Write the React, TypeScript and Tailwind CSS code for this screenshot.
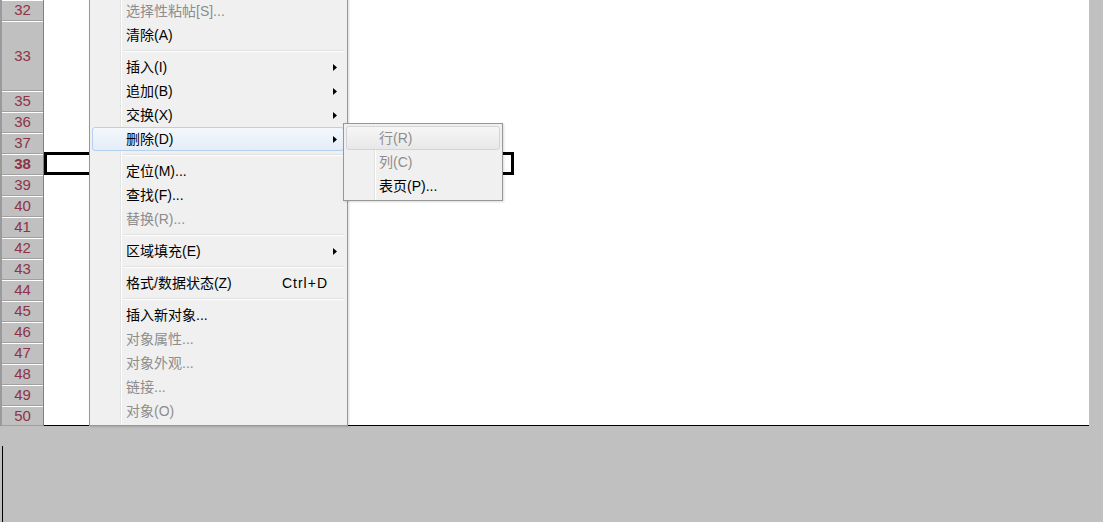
import React from 'react';

type MenuItem =
  | { kind: 'sep' }
  | { kind: 'item'; label: string; disabled?: boolean; arrow?: boolean; shortcut?: string; active?: boolean };

const menuItems: MenuItem[] = [
  { kind: 'item', label: '选择性粘帖[S]...', disabled: true },
  { kind: 'item', label: '清除(A)' },
  { kind: 'sep' },
  { kind: 'item', label: '插入(I)', arrow: true },
  { kind: 'item', label: '追加(B)', arrow: true },
  { kind: 'item', label: '交换(X)', arrow: true },
  { kind: 'item', label: '删除(D)', arrow: true, active: true },
  { kind: 'sep' },
  { kind: 'item', label: '定位(M)...' },
  { kind: 'item', label: '查找(F)...' },
  { kind: 'item', label: '替换(R)...', disabled: true },
  { kind: 'sep' },
  { kind: 'item', label: '区域填充(E)', arrow: true },
  { kind: 'sep' },
  { kind: 'item', label: '格式/数据状态(Z)', shortcut: 'Ctrl+D' },
  { kind: 'sep' },
  { kind: 'item', label: '插入新对象...' },
  { kind: 'item', label: '对象属性...', disabled: true },
  { kind: 'item', label: '对象外观...', disabled: true },
  { kind: 'item', label: '链接...', disabled: true },
  { kind: 'item', label: '对象(O)', disabled: true },
];

const subItems: MenuItem[] = [
  { kind: 'item', label: '行(R)', disabled: true, active: true },
  { kind: 'item', label: '列(C)', disabled: true },
  { kind: 'item', label: '表页(P)...' },
];

const rows: { n: number; h: string }[] = [
  { n: 32, h: 'h-[21px]' },
  { n: 33, h: 'h-[70px]' },
  ...[35, 36, 37, 38, 39, 40, 41, 42, 43, 44, 45, 46, 47, 48, 49].map((n) => ({ n, h: 'h-[21px]' })),
  { n: 50, h: 'h-[20px]' },
];

const font = { fontFamily: '"Liberation Sans", "Noto Sans CJK SC", sans-serif' };

function Arrow() {
  return (
    <svg width="4" height="7" viewBox="0 0 4 7" className="block">
      <path d="M0 0 L4 3.5 L0 7 Z" fill="#000" />
    </svg>
  );
}

function MenuRow({ item, gutter }: { item: MenuItem; gutter: string }) {
  if (item.kind === 'sep') {
    return (
      <div className="h-[8px] flex items-center">
        <div className={`${gutter} shrink-0`} />
        <div className="flex-1 border-t border-[#e0e0e0] border-b border-b-white" />
      </div>
    );
  }
  let look = 'border-transparent';
  if (item.active && item.disabled) look = 'border-[#d4d4d4] bg-gradient-to-b from-[#f6f6f6] to-[#e8e8e8]';
  else if (item.active) look = 'border-[#b4d2ee] bg-gradient-to-b from-[#f4f8fc] to-[#e4edf7]';
  return (
    <div className={`relative h-[24px] flex items-center rounded-[3px] border ${look}`}>
      <div className={`${gutter} shrink-0`} />
      <span className={`flex-1 text-[14px] leading-none ${item.disabled ? 'text-[#8d8d8d]' : 'text-black'}`}>
        {item.label}
      </span>
      {item.shortcut && (
        <span className="text-[14px] leading-none text-black mr-[15px] tracking-[1px]">{item.shortcut}</span>
      )}
      {item.arrow && (
        <div className="mr-[6px]">
          <Arrow />
        </div>
      )}
    </div>
  );
}

export default function App() {
  return (
    <div className="relative w-[1103px] h-[522px] bg-[#c0c0c0] overflow-hidden" style={font}>
      <div className="flex w-[1089px] h-[426px]">
        <div className="w-[2px] bg-[#9a9a9a]" />
        <div className="w-[42px] flex flex-col border-r border-[#808080]">
          {rows.map((r) => (
            <div
              key={r.n}
              className={`${r.h} shrink-0 flex items-center justify-center bg-[#c0c0c0] border-t border-white border-b border-b-[#a0a0a0] text-[15px] text-[#8e3447] ${
                r.n === 38 ? 'font-bold' : ''
              }`}
            >
              {r.n}
            </div>
          ))}
        </div>
        <div className="relative flex-1 bg-white border-b border-black">
          <div className="absolute left-0 top-[152px] w-[470px] h-[23px] border-[3px] border-black" />
        </div>
      </div>

      <div className="absolute left-0 top-[446px] w-[1px] h-[76px] ml-[2px] bg-black" />

      <div className="absolute left-[89px] top-[-4px] w-[259px] bg-[#f0f0f0] border border-[#979797] pl-[2px] pr-[3px] py-[2px] shadow-[1px_1px_2px_rgba(0,0,0,0.15)]">
        <div className="absolute left-[30px] top-0 bottom-0 w-[2px] border-l border-[#e2e3e3] border-r border-r-white" />
        {menuItems.map((item, i) => (
          <MenuRow key={i} item={item} gutter="w-[33px]" />
        ))}
      </div>

      <div className="absolute left-[343px] top-[123px] w-[160px] bg-[#f0f0f0] border border-[#979797] pl-[2px] pr-[2px] py-[2px] shadow-[1px_1px_2px_rgba(0,0,0,0.15)]">
        <div className="absolute left-[30px] top-0 bottom-0 w-[2px] border-l border-[#e2e3e3] border-r border-r-white" />
        {subItems.map((item, i) => (
          <MenuRow key={i} item={item} gutter="w-[32px]" />
        ))}
      </div>
    </div>
  );
}
